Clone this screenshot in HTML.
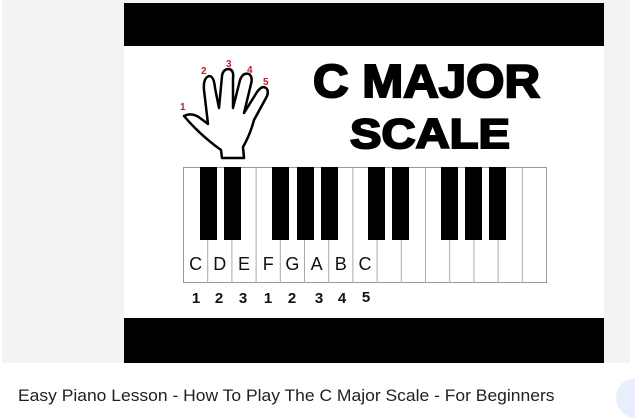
<!DOCTYPE html>
<html><head><meta charset="utf-8"><style>
html,body{margin:0;padding:0;background:#fff;width:635px;height:410px;overflow:hidden;font-family:"Liberation Sans",sans-serif}
.bg{position:absolute;left:2px;top:0;width:628px;height:363px;background:#f1f3f4}
.circ{position:absolute;left:616px;top:378px;width:40px;height:40px;border-radius:50%;background:#e8eefc}
.title{position:absolute;left:18px;top:386px;font-size:17px;color:#202124;white-space:nowrap;transform:scaleX(1.028);transform-origin:0 0}
svg{position:absolute;left:0;top:0}
</style></head><body>
<div class="bg"></div>
<svg width="635" height="410" viewBox="0 0 635 410">
<rect x="124" y="3" width="480" height="360" fill="#fff"/>
<rect x="124" y="3" width="480" height="43" fill="#000"/>
<rect x="124" y="318" width="480" height="45" fill="#000"/>
<text x="313" y="97" font-family="Liberation Sans" font-weight="bold" font-size="46" textLength="227" lengthAdjust="spacingAndGlyphs" fill="#000" stroke="#000" stroke-width="2">C MAJOR</text>
<text x="350" y="148" font-family="Liberation Sans" font-weight="bold" font-size="42" textLength="160" lengthAdjust="spacingAndGlyphs" fill="#000" stroke="#000" stroke-width="2">SCALE</text>
<path d="M184 116 Q192 112 200 118 L208 124 L204 90 Q203 78 209 76 Q214 76 215 88 L219 108 L222 76 Q223 69 229 69 Q234 70 233 78 L233 108 L240 80 Q243 72 249 74 Q253 77 251 84 L244 113 L257 92 Q263 84 267 89 Q269 93 266 98 L254 120 Q250 135 243 147 L244 158 L222 158 L221 150 Q200 135 184 116 Z" fill="#fff" stroke="#000" stroke-width="2.5" stroke-linejoin="round"/>
<g fill="#c0202a" font-weight="bold" font-size="10" font-family="Liberation Sans">
<text x="180" y="110">1</text><text x="201" y="74">2</text><text x="226" y="67">3</text><text x="247" y="73">4</text><text x="263" y="85">5</text></g>
<rect x="183.5" y="167.5" width="363" height="115" fill="#fff" stroke="#999"/>
<g stroke="#aaa" stroke-width="1">
<line x1="207.7" y1="167" x2="207.7" y2="283"/><line x1="231.9" y1="167" x2="231.9" y2="283"/><line x1="256.1" y1="167" x2="256.1" y2="283"/><line x1="280.3" y1="167" x2="280.3" y2="283"/><line x1="304.5" y1="167" x2="304.5" y2="283"/><line x1="328.7" y1="167" x2="328.7" y2="283"/><line x1="352.9" y1="167" x2="352.9" y2="283"/><line x1="377.1" y1="167" x2="377.1" y2="283"/><line x1="401.3" y1="167" x2="401.3" y2="283"/><line x1="425.5" y1="167" x2="425.5" y2="283"/><line x1="449.7" y1="167" x2="449.7" y2="283"/><line x1="473.9" y1="167" x2="473.9" y2="283"/><line x1="498.1" y1="167" x2="498.1" y2="283"/><line x1="522.3" y1="167" x2="522.3" y2="283"/>
</g>
<g fill="#000">
<rect x="200" y="167" width="17" height="73"/><rect x="224" y="167" width="17" height="73"/><rect x="272" y="167" width="17" height="73"/><rect x="297" y="167" width="17" height="73"/><rect x="321" y="167" width="17" height="73"/><rect x="368" y="167" width="17" height="73"/><rect x="392" y="167" width="17" height="73"/><rect x="441" y="167" width="17" height="73"/><rect x="465" y="167" width="17" height="73"/><rect x="489" y="167" width="17" height="73"/>
</g>
<g font-family="Liberation Sans" font-size="18" text-anchor="middle" fill="#111">
<text x="195.6" y="270">C</text><text x="219.8" y="270">D</text><text x="244" y="270">E</text><text x="268.2" y="270">F</text><text x="292.4" y="270">G</text><text x="316.6" y="270">A</text><text x="340.8" y="270">B</text><text x="365" y="270">C</text>
</g>
<g font-family="Liberation Sans" font-size="15" font-weight="bold" text-anchor="middle" fill="#111">
<text x="196" y="303">1</text><text x="219" y="303">2</text><text x="243" y="303">3</text><text x="268" y="303">1</text><text x="292" y="303">2</text><text x="319" y="303">3</text><text x="342" y="303">4</text><text x="366" y="302">5</text>
</g>
</svg>
<div class="circ"></div>
<div class="title">Easy Piano Lesson - How To Play The C Major Scale - For Beginners</div>
</body></html>
